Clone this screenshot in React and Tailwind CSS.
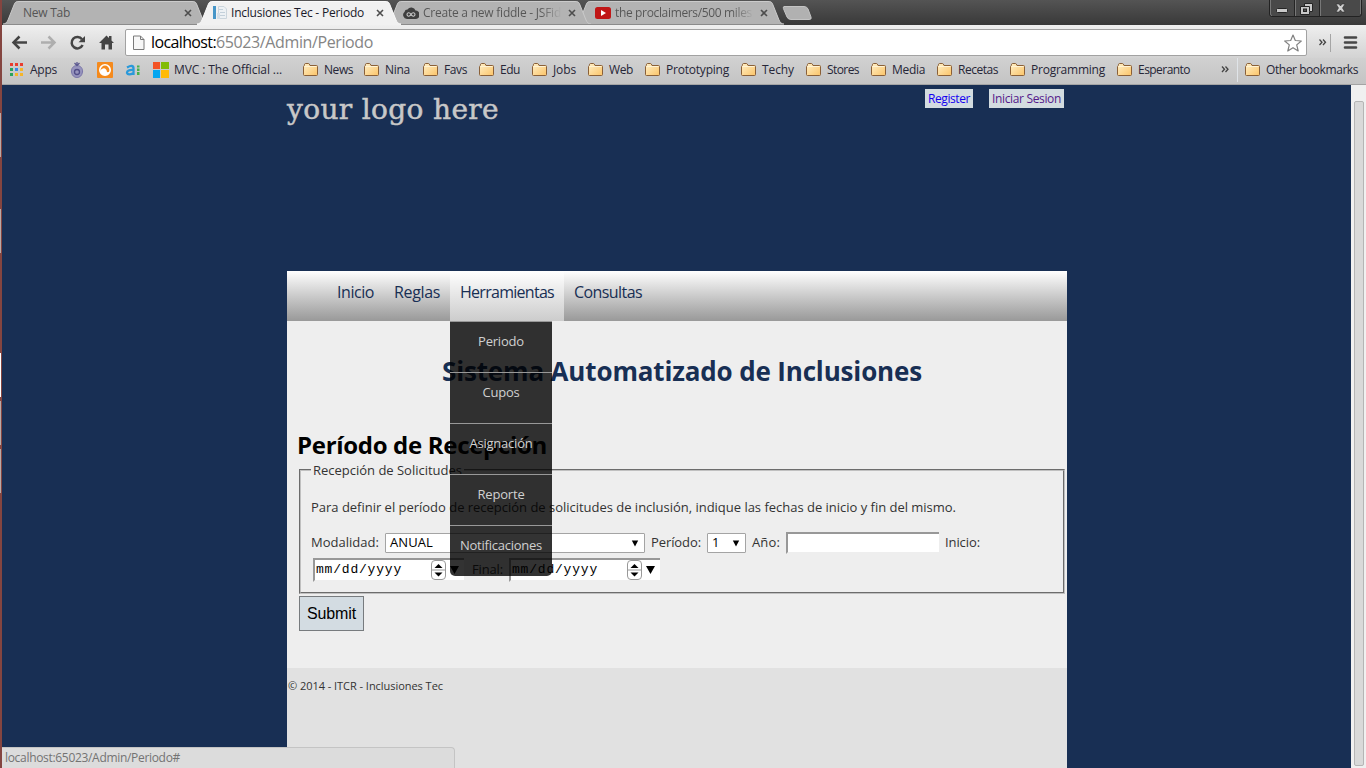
import { useLayoutEffect, useRef, useState } from "react";

const UI = "font-['Open_Sans','Noto_Sans',sans-serif]";

// Text run that adjusts its tracking so it occupies exactly `w` pixels.
function Fit({ w, className = "", children }) {
  const ref = useRef(null);
  const [ls, setLs] = useState(0);
  useLayoutEffect(() => {
    const el = ref.current;
    const natural = el.getBoundingClientRect().width;
    setLs((w - natural) / el.textContent.length);
  }, [w]);
  return (
    <span ref={ref} className={`inline-block shrink-0 whitespace-nowrap ${className}`} style={{ letterSpacing: `${ls}px` }}>
      {children}
    </span>
  );
}

function TabShape({ width, active }) {
  const r = width;
  const d = `M0 24 C3 24 4 22 5 20 L11 5 C12 2 13 1.5 16 1.5 L${r - 16} 1.5 C${r - 13} 1.5 ${r - 12} 2 ${r - 11} 5 L${r - 5} 20 C${r - 4} 22 ${r - 3} 24 ${r} 24`;
  return (
    <svg className="absolute inset-0" width={width} height="25" viewBox={`0 0 ${width} 25`}>
      <path d={`${d} L${r} 25 L0 25 Z`} fill={active ? "#f1f1f1" : "#b3b3b3"} />
      <path d={d} fill="none" stroke={active ? "#fafafa" : "#cbcbcb"} strokeWidth="1" />
      {!active && <path d={`M0 24.5 H${r}`} stroke="#8b8b8b" />}
    </svg>
  );
}

function CloseX() {
  return (
    <svg width="8" height="8" viewBox="0 0 8 8" className="shrink-0">
      <path d="M1 1 L7 7 M7 1 L1 7" stroke="#4d4d4d" strokeWidth="1.6" />
    </svg>
  );
}

function Folder() {
  return (
    <svg width="16" height="14" viewBox="0 0 16 14" className="shrink-0">
      <defs>
        <linearGradient id="folder" x1="0" y1="0" x2="1" y2="1">
          <stop offset="0" stopColor="#fff0c8" />
          <stop offset="1" stopColor="#fbc468" />
        </linearGradient>
      </defs>
      <path d="M.5 3.5 V11.5 Q.5 12.5 1.5 12.5 H13.5 Q14.500 12.500 14.500 11.500 V3.500 Q14.500 2.500 13.500 2.500 H7 L6.300 1 Q6 .5 5.500 .5 H2.500 Q1.800 .5 1.600 1.200 L1.300 2.500 Z" fill="url(#folder)" stroke="#8a6038" />
      <path d="M1.500 3.500 H13.500" stroke="#fff3d4" />
    </svg>
  );
}

const folders = [
  ["News", 303, 29],
  ["Nina", 364, 25],
  ["Favs", 423, 23],
  ["Edu", 479, 20],
  ["Jobs", 532, 23],
  ["Web", 588, 24],
  ["Prototyping", 645, 63],
  ["Techy", 741, 32],
  ["Stores", 806, 32],
  ["Media", 871, 33],
  ["Recetas", 937, 40],
  ["Programming", 1010, 74],
  ["Esperanto", 1117, 52],
];

function TabStrip() {
  return (
    <div className="relative flex h-[25px] shrink-0 bg-linear-to-b from-[#545454] to-[#393939]">
      <div className="relative ml-px h-[25px] w-[205px] shrink-0">
        <TabShape width={205} />
        <div className="relative flex h-[25px] items-center pl-5 text-[12px] text-[#555]">
          <Fit w={47}>New Tab</Fit>
          <div className="ml-[114px]"><CloseX /></div>
        </div>
      </div>
      <div className="relative z-10 -ml-[11px] h-[25px] w-[204px] shrink-0">
        <TabShape width={204} active />
        <div className="relative flex h-[25px] items-center pl-[15px] text-[12px] text-[#1a1a2a]">
          <svg width="16" height="16" viewBox="0 0 16 16" className="mr-[3px] shrink-0">
            <path d="M1 1 H4 V14 H1 Z" fill="#4796c8" />
            <path d="M6.500 1.500 H12 L14.500 4 V13.500 H6.500 Z" fill="#edf1f4" stroke="#cbd5dc" />
            <path d="M7 4.500 H11 M8 7.500 H13 M8 10.500 H13" stroke="#c3d0da" />
            <path d="M5 8 H8 V14 H5 Z" fill="#d5dfe7" />
          </svg>
          <Fit w={133}>Inclusiones Tec - Periodo</Fit>
          <div className="ml-3"><CloseX /></div>
        </div>
      </div>
      <div className="relative z-[5] -ml-[15px] h-[25px] w-[205px] shrink-0">
        <TabShape width={205} />
        <div className="relative flex h-[25px] items-center pl-[17px] text-[12px] text-[#555]">
          <svg width="16" height="12" viewBox="0 0 16 12" className="mr-1 shrink-0">
            <path d="M4 12 A4 4 0 0 1 1.5 5 A3 3 0 0 1 4.5 2.6 A4.4 4.4 0 0 1 12.5 3.6 A4 4 0 0 1 12.5 12 Z" fill="#3f3f3f" />
            <path d="M8 7.5 C6.5 5 4 5.5 4 7.5 C4 9.5 6.5 10 8 7.5 C9.5 5 12 5.5 12 7.5 C12 9.5 9.5 10 8 7.5 Z" fill="none" stroke="#c8c8c8" strokeWidth="1.1" />
          </svg>
          <div className="flex bg-linear-to-r from-[#555] from-85% to-[#b0b0b0] bg-clip-text text-transparent"><Fit w={138}>Create a new fiddle - JSFid</Fit></div>
          <div className="ml-[7px]"><CloseX /></div>
        </div>
      </div>
      <div className="relative -ml-4 h-[25px] w-[209px] shrink-0">
        <TabShape width={209} />
        <div className="relative flex h-[25px] items-center pl-5 text-[12px] text-[#555]">
          <svg width="16" height="12" viewBox="0 0 16 12" className="mr-1 shrink-0">
            <rect width="16" height="12" rx="2.5" fill="#c01616" />
            <path d="M6 3 L11 6 L6 9 Z" fill="#fff" />
          </svg>
          <div className="flex bg-linear-to-r from-[#555] from-85% to-[#aaa] bg-clip-text text-transparent"><Fit w={137}>the proclaimers/500 miles</Fit></div>
          <div className="ml-2"><CloseX /></div>
        </div>
      </div>
      <svg width="34" height="25" viewBox="0 0 34 25" className="-ml-[3px] shrink-0">
        <path d="M3 6.5 H23 Q26 6.5 27 9 L30 17 Q31 19.5 28 19.5 H10 Q7 19.5 6 17 L2.4 8.5 Q2 6.5 3 6.5 Z" fill="#b1b1b1" stroke="#c4c4c4" />
      </svg>
      <svg width="94" height="18" viewBox="0 0 94 18" className="ml-auto mr-[3px] shrink-0">
        <path d="M.5 0 V14 Q.5 16.5 3 16.5 H90 Q92.5 16.5 92.5 14 V0" fill="#494949" stroke="#222" />
        <path d="M1.5 0 V14 Q1.5 15.5 3 15.5 M91.5 0 V14" fill="none" stroke="#777" />
        <path d="M25.5 0 V16 M50.5 0 V16" stroke="#252525" />
        <path d="M26.5 0 V16 M51.5 0 V16" stroke="#777" />
        <rect x="7.500" y="8.500" width="11" height="4" rx="1" fill="#c9c9c9" stroke="#252525" />
        <path d="M35.500 3.500 H43.500 V11.500 H40.500 V14.500 H31.500 V6.500 H35.500 Z" fill="#c9c9c9" stroke="#252525" />
        <path d="M35 6.500 H40.500 V11" fill="none" stroke="#252525" />
        <rect x="34.500" y="9" width="3" height="2.500" fill="#555" stroke="#252525" />
        <path d="M67 4 H70 L71.500 6 L73 4 H76 L73.500 8 L76 12 H73 L71.500 10 L70 12 H67 L69.500 8 Z" fill="#d0d0d0" stroke="#2b2b2b" strokeWidth=".6" />
      </svg>
    </div>
  );
}

function Toolbar() {
  return (
    <div className="flex h-[33px] shrink-0 items-start bg-linear-to-b from-[#efefef] to-[#d3d3d3]">
      <svg width="120" height="33" viewBox="2 25 120 33" className="shrink-0">
        <g fill="none" stroke="#444" strokeWidth="2.500">
          <path d="M14 42.500 H27" />
          <path d="M19.500 36.500 L13.500 42.500 L19.500 48.500" />
          <path d="M41 42.500 H54 M48.500 36.500 L54.500 42.500 L48.500 48.500" stroke="#aeaeae" />
          <path d="M82 39.300 A5.700 5.700 0 1 0 82.600 45" />
        </g>
        <path d="M85 36 V42.300 H78.500 Z" fill="#444" />
        <path d="M106.500 35.500 L99 43 H101.500 V49.500 H105 V44.500 H108.500 V49.500 H112 V43 H114 L111.500 40.500 V36 H109 V38 Z" fill="#444" />
      </svg>
      <div className="mt-1 ml-[3px] flex h-[27px] w-[1182px] shrink-0 items-center rounded-[2px] border border-[#a2a2a2] bg-white">
        <svg width="12" height="16" viewBox="0 0 12 16" className="ml-[7px] shrink-0">
          <path d="M.5 1 H7.500 L11 4.500 V14.500 H.5 Z" fill="#f7f7f7" stroke="#7a7a7a" />
          <path d="M7.500 1 V4.500 H11" fill="none" stroke="#7a7a7a" />
        </svg>
        <div className="ml-[6px] flex text-[16px] leading-[25px]">
          <Fit w={65} className="text-black">localhost:</Fit>
          <Fit w={157} className="text-[#858585]">65023/Admin/Periodo</Fit>
        </div>
        <svg width="20" height="20" viewBox="0 0 20 20" className="ml-auto mr-[3px] shrink-0">
          <path d="M10 2 L12.300 7.500 L18.300 8 L13.700 11.900 L15.200 18 L10 14.700 L4.800 18 L6.300 11.900 L1.700 8 L7.700 7.500 Z" fill="#fff" stroke="#808080" strokeWidth="1.200" strokeLinejoin="round" />
        </svg>
      </div>
      <svg width="57" height="33" viewBox="1307 25 57 33" className="shrink-0">
        <path d="M1319.500 39.500 L1322 42.200 L1319.500 45 M1323 39.500 L1325.500 42.200 L1323 45" fill="none" stroke="#444" strokeWidth="1.300" />
        <path d="M1330.500 34 V52" stroke="#a5a5a5" />
        <path d="M1345 37.500 H1356 M1345 42.500 H1356 M1345 47.500 H1356" stroke="#474747" strokeWidth="2.600" strokeLinecap="round" />
      </svg>
    </div>
  );
}

function Bookmarks() {
  return (
    <div className="flex h-[27px] shrink-0 items-center border-b border-[#a4a4a4] bg-linear-to-b from-[#d1d1d1] to-[#c4c4c4] pb-[2px] text-[12px] text-[#262637]">
      <svg width="28" height="18" viewBox="2 61 28 18" className="shrink-0">
        <path d="M10 63h3v3h-3zM15 63h3v3h-3zM20 63h3v3h-3z" fill="#e83e30" />
        <path d="M15 68h3v3h-3z" fill="#3789ea" />
        <path d="M20 68h3v3h-3zM20 73h3v3h-3zM15 73h3v3h-3z" fill="#f5b52a" />
        <path d="M10 68h3v3h-3zM10 73h3v3h-3z" fill="#28a45b" />
      </svg>
      <Fit w={27}>Apps</Fit>
      <svg width="117" height="20" viewBox="57 60 117 20" className="shrink-0">
        <path d="M77 65.500 C81 65.500 83 69 82.500 72 C82 75.500 80 77.500 77 77.500 C74 77.500 72 75.500 71.500 72 C71 69 73 65.500 77 65.500 Z" fill="#9794bd" stroke="#7975a8" />
        <circle cx="77" cy="72" r="2.500" fill="none" stroke="#514d87" strokeWidth="1.300" />
        <path d="M77 62 V66 M74.500 63 L77 65.500 L79.500 63" fill="none" stroke="#5c5990" strokeWidth="1.300" />
        <rect x="97" y="62" width="16" height="16" rx="1" fill="#f58a1c" />
        <circle cx="105" cy="70" r="5.200" fill="#f58a1c" stroke="#fff" strokeWidth="1.600" />
        <path d="M100 71 Q102 67.500 105 68.500 Q107 69.500 107 72 Q109 72.500 110 71 Q109 75 105 75 Q101 75 100 71" fill="#fff" />
        <path d="M127 67.500 Q133.500 64 133.500 68.500 V75 M133.500 70 Q127 69.500 127 72.800 Q128 76 133.500 73" fill="none" stroke="#2999da" strokeWidth="2.300" />
        <path d="M137 65.500h2.500v2h-2.500zM137 68.500h2.500v2.500h-2.500zM137 72h2.500v3h-2.500z" fill="#45b24c" />
        <path d="M153 62h7v7h-7z" fill="#f35325" />
        <path d="M161 62h8v7h-8z" fill="#81bc06" />
        <path d="M153 70h7v8h-7z" fill="#05a6f0" />
        <path d="M161 70h8v8h-8z" fill="#ffba08" />
      </svg>
      <Fit w={108}>MVC : The Official ...</Fit>
      <div className="ml-[21px] flex w-[917px] shrink-0">
        {folders.map(([name, x, w], i) => (
          <div key={name} className="flex shrink-0 items-center gap-[5px]" style={{ width: (folders[i + 1]?.[1] ?? 1220) - x }}>
            <Folder />
            <Fit w={w}>{name}</Fit>
          </div>
        ))}
      </div>
      <svg width="25" height="26" viewBox="1220 58 25 26" className="shrink-0">
        <path d="M1222 67.500 L1224.500 70.200 L1222 73 M1225.500 67.500 L1228 70.200 L1225.500 73" fill="none" stroke="#444" strokeWidth="1.300" />
        <path d="M1237.500 59 V83" stroke="#e0e4e8" />
      </svg>
      <div className="flex items-center gap-[5px]">
        <Folder />
        <Fit w={92}>Other bookmarks</Fit>
      </div>
    </div>
  );
}

function DateInput() {
  return (
    <div className="flex h-6 w-[151px] items-center border-2 border-r-0 border-[#989898] border-b-[#eee] bg-white">
      <Fit w={86} className="ml-px font-['Liberation_Mono',monospace] text-[13px] text-black">mm/dd/yyyy</Fit>
      <svg width="46" height="20" viewBox="0 0 46 20" className="ml-auto shrink-0">
        <rect x="13.500" y=".5" width="14" height="19" rx="3.500" fill="#fff" stroke="#999" />
        <path d="M13.500 10 H27.500" stroke="#999" />
        <path d="M16.500 8 L20.500 4 L24.500 8 Z M16.500 12.500 L20.500 16.500 L24.500 12.500 Z M32 6 H41 L36.500 14 Z" fill="#000" />
      </svg>
    </div>
  );
}

function Select({ className, children }) {
  return (
    <div className={`flex h-5 items-center justify-between rounded-[1px] border border-[#a4a4a4] bg-white pr-[5px] pl-1 text-black ${className}`}>
      {children}
      <svg width="8" height="7" viewBox="0 0 8 7"><path d="M.8 .5 H7.200 L4 6.500 Z" fill="#000" /></svg>
    </div>
  );
}

const menu = [["Periodo", 46], ["Cupos", 37], ["Asignación", 63], ["Reporte", 47], ["Notificaciones", 82]];

function Nav() {
  return (
    <nav className="flex h-[50px] shrink-0 bg-linear-to-b from-white to-[#999] pl-10 text-[16px] leading-[42px] text-[#182f54]">
      <div className="flex w-[57px] justify-center"><Fit w={37}>Inicio</Fit></div>
      <div className="flex w-[66px] justify-center"><Fit w={46}>Reglas</Fit></div>
      <div className="relative flex w-[114px] justify-center bg-linear-to-b from-white to-[#ccc]">
        <Fit w={94}>Herramientas</Fit>
        <ul className="absolute top-[50px] left-0 z-20 w-[102px] overflow-hidden rounded-b-[5px] bg-black/80 text-[13px] leading-[38px] text-[#d0d0d0]">
          {menu.map(([name, w]) => (
            <li key={name} className="flex h-[51px] justify-center border-t border-[#989898]">
              <Fit w={w}>{name}</Fit>
            </li>
          ))}
        </ul>
      </div>
      <div className="flex w-[88px] justify-center"><Fit w={68}>Consultas</Fit></div>
    </nav>
  );
}

function Page() {
  return (
    <div className="relative flex w-[1349px] shrink-0 flex-col bg-[#182f54] pl-[285px]">
      <header className="flex h-[186px] w-[780px] shrink-0 items-start justify-between pr-[3px]">
        <Fit w={212} className="mt-1 font-['DejaVu_Serif',serif] text-[28px] leading-[42px] text-[#c8c8c8] [-webkit-text-stroke:0.5px_#c8c8c8]">your logo here</Fit>
        <div className="mt-1 flex gap-4 text-[12px] leading-[19px]">
          <div className="flex h-[19px] bg-[#d3dce0] px-[3px] text-[#1400f0]"><Fit w={42}>Register</Fit></div>
          <div className="flex h-[19px] bg-[#d3dce0] px-[3px] text-[#551a8b]"><Fit w={69}>Iniciar Sesion</Fit></div>
        </div>
      </header>
      <div className="flex w-[780px] shrink-0 flex-col">
        <Nav />
        <main className="flex h-[347px] shrink-0 flex-col bg-[#eee] text-[#333]">
          <h1 className="mt-8 ml-[155px] flex h-9 text-[26px] leading-9 font-bold text-[#182f54]">
            <Fit w={480}>Sistema Automatizado de Inclusiones</Fit>
          </h1>
          <h2 className="mt-10 ml-[10px] flex h-8 text-[24px] leading-8 font-bold text-black">
            <Fit w={250}>Período de Recepción</Fit>
          </h2>
          <fieldset className="-mt-px ml-3 h-[134px] w-[766px] shrink-0 border-2 border-[#c0c0c0] [border-style:groove] px-[10px] text-[13px]">
            <legend className="flex h-[19px] px-[2px] leading-[20px]"><Fit w={149}>Recepción de Solicitudes</Fit></legend>
            <p className="mt-[18px] flex h-5 leading-5"><Fit w={645}>Para definir el período de recepción de solicitudes de inclusión, indique las fechas de inicio y fin del mismo.</Fit></p>
            <div className="mt-[15px] flex h-[22px] items-center">
              <Fit w={68}>Modalidad:</Fit>
              <Select className="mx-[6px] w-[260px]"><Fit w={43}>ANUAL</Fit></Select>
              <Fit w={50}>Período:</Fit>
              <Select className="mx-[6px] w-[39px]"><span>1</span></Select>
              <Fit w={28}>Año:</Fit>
              <div className="mx-[6px] h-[22px] w-[153px] border-2 border-r-0 border-[#989898] border-b-[#eee] bg-white" />
              <Fit w={35}>Inicio:</Fit>
            </div>
            <div className="mt-1 ml-[2px] flex h-6 items-center">
              <DateInput />
              <Fit w={31} className="mr-[6px] ml-2">Final:</Fit>
              <DateInput />
            </div>
          </fieldset>
          <button className="mt-[2px] ml-3 flex h-[35px] w-[65px] shrink-0 items-center justify-center border border-[#777b7e] bg-[#d3dce2] font-['Liberation_Sans',sans-serif] text-[16px] text-black">
            <Fit w={49}>Submit</Fit>
          </button>
        </main>
        <footer className="h-[100px] shrink-0 bg-[#e1e1e1] pt-[9px] pl-px text-[11px] leading-[18px] text-[#333]">
          <Fit w={155}>© 2014 - ITCR - Inclusiones Tec</Fit>
        </footer>
      </div>
      <div className="absolute bottom-0 left-0 flex h-[21px] w-[453px] rounded-tr-[4px] border-t border-r border-[#c4c4c4] bg-[#dcdcdc] pl-[3px] text-[12px] leading-[20px] text-[#737373]">
        <Fit w={175}>localhost:65023/Admin/Periodo#</Fit>
      </div>
    </div>
  );
}

export default function App() {
  return (
    <div className={`flex h-[768px] w-[1366px] overflow-hidden ${UI}`}>
      <div className="flex w-[2px] shrink-0 flex-col bg-[#844540]">
        <div className="mt-[113px] h-11 w-px bg-[#b9aaa8]" />
        <div className="mt-[52px] h-11 w-px bg-[#b9aaa8]" />
        <div className="mt-[100px] h-11 w-px bg-white" />
        <div className="mt-1 h-11 w-px bg-[#b9aaa8]" />
        <div className="mt-1 h-11 w-px bg-[#b9aaa8]" />
      </div>
      <div className="flex w-[1364px] shrink-0 flex-col">
        <TabStrip />
        <Toolbar />
        <Bookmarks />
        <div className="flex h-[683px] shrink-0">
          <Page />
          <div className="w-[15px] shrink-0 bg-[#f0f0f0] pt-4 pr-[2px] pl-[3px]">
            <div className="h-[665px] rounded-[2px] border border-[#b5b5b5] bg-[#d9d9d9]" />
          </div>
        </div>
      </div>
    </div>
  );
}
